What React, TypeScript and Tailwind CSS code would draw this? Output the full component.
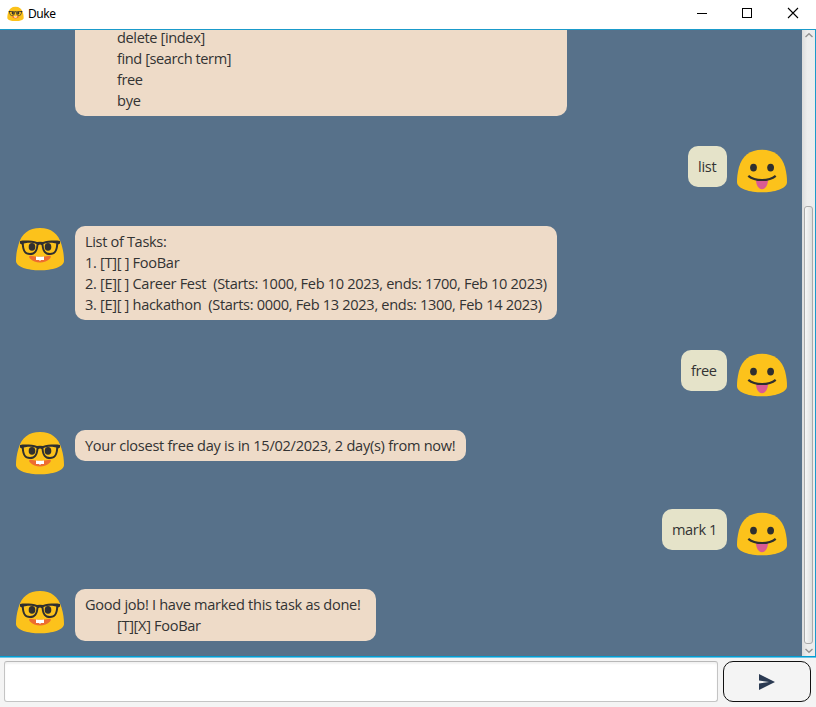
import React from "react";

function Nerd({ className = "" }: { className?: string }) {
  return (
    <svg viewBox="0 0 50 50" className={`shrink-0 ${className}`}>
      <path d="M25 2C36 2 43.5 7.5 46.5 18.5C48.4 25 49 30 49 35C49 41 37 44.3 25 44.3S1 41 1 35C1 30 1.6 25 3.5 18.5C6.5 7.5 14 2 25 2Z" fill="#fcc21b" />
      <ellipse cx="17" cy="20.9" rx="3.3" ry="3.8" fill="#2f2f2f" />
      <ellipse cx="33" cy="20.9" rx="3.3" ry="3.8" fill="#2f2f2f" />
      <path d="M15.5 29.8C14 29.6 13.6 31 15 32.4C20 37.8 30 37.8 35 32.4C36.4 31 36 29.6 34.5 29.8C28 31 22 31 15.5 29.8Z" fill="#ed6c30" />
      <path d="M21 30.5Q25 31 29 30.5V34H25.5V35H24.5V34H21Z" fill="#fff" />
      <path d="M5 14.9C10 14.3 18 14.6 22 16Q25 15.4 28 16C32 14.6 40 14.3 45 14.9V17.6L43.2 18.6C42.6 25.5 40.5 29 35 29C29.5 29 27.3 25.5 26.6 19.2C26 18.3 24 18.3 23.4 19.2C22.7 25.5 20.5 29 15 29C9.5 29 7.4 25.5 6.8 18.6L5 17.6ZM8.8 17.5C9 24 10.5 27 15 27C19.5 27 21.3 24 21.5 18C18 16.4 12 16.4 8.8 17.5ZM41.2 17.5C38 16.4 32 16.4 28.5 18C28.7 24 30.5 27 35 27C39.5 27 41 24 41.2 17.5Z" fill="#2f2f2f" />
    </svg>
  );
}

function Tongue() {
  return (
    <svg viewBox="0 0 50 50" className="h-[50px] w-[50px] shrink-0">
      <path d="M25 3.7C37 3.7 45 10 48 21C49.5 27 50 31 50 36C50 43 37 46.3 25 46.3S0 43 0 36C0 31 .5 27 2 21C5 10 13 3.7 25 3.7Z" fill="#fcc21b" />
      <ellipse cx="16.5" cy="21.6" rx="3.4" ry="3.9" fill="#2f2f2f" />
      <ellipse cx="33.6" cy="21.6" rx="3.4" ry="3.9" fill="#2f2f2f" />
      <path d="M19 34Q25 35.5 31 34C31 39 28.5 43.2 25 43.2S19 39 19 34Z" fill="#da5a93" />
      <path d="M11.3 29.8C18 35.4 32 35.4 38.7 29.8" fill="none" stroke="#2f2f2f" strokeWidth="2.2" />
    </svg>
  );
}

type Line = { text: string; cls: string };

function Bot({ lines, box, gap = "mb-[30px]", avatar = true }: { lines: Line[]; box: string; gap?: string; avatar?: boolean }) {
  return (
    <div className={`flex shrink-0 items-start gap-[10px] pl-[15px] ${gap}`}>
      {avatar ? <Nerd className="h-[50px] w-[50px] -mb-[30px]" /> : <div className="w-[50px] shrink-0" />}
      <div className={`rounded-[10px] bg-[#eedbc8] px-[10px] ${box}`}>
        {lines.map((l) => (
          <div key={l.text} className={`whitespace-pre ${l.cls}`}>{l.text}</div>
        ))}
      </div>
    </div>
  );
}

function User({ text, box }: { text: string; box: string }) {
  return (
    <div className="mb-[30px] flex h-[50px] shrink-0 items-start justify-end gap-[10px] pr-[15px]">
      <div className={`h-[41px] rounded-[10px] bg-[#e5e3c9] px-[10px] py-[10px] leading-[21px] whitespace-pre ${box}`}>{text}</div>
      <Tongue />
    </div>
  );
}

export default function App() {
  return (
    <div className="flex h-[707px] w-[816px] flex-col overflow-hidden bg-[#f4f4f4] font-['Open_Sans','Noto_Sans',sans-serif] text-[14.6px] leading-[21px] text-[#333]">
      <header className="flex h-[29px] shrink-0 items-center bg-white pl-[7px] text-black">
        <Nerd className="mt-[-1px] h-[17px] w-[17px]" />
        <span className="mt-[-2px] ml-1 font-['Noto_Sans',sans-serif] text-[12px] leading-4 tracking-[-0.45px]">Duke</span>
        <svg className="ml-auto h-[29px] w-[120px]" fill="none" stroke="#000" shapeRendering="crispEdges">
          <path d="M1 13.5H11M46.5 8.5H55.5V17.5H46.5Z" />
          <path d="M92 8L102 18M102 8L92 18" shapeRendering="auto" strokeWidth="1.1" />
        </svg>
      </header>
      <div className="h-px shrink-0 bg-[#1a9bcb]" />
      <main className="flex h-[626px] shrink-0 bg-[#57718a]">
        <section className="flex h-full w-[802px] flex-col justify-end overflow-hidden">
          <Bot
            avatar={false}
            box="w-[492px] rounded-t-none pb-[5px]"
            lines={[
              { text: "delete [index]", cls: "h-[18px] pl-8 leading-[15px] tracking-[-0.38px]" },
              { text: "find [search term]", cls: "pl-8 tracking-[-0.42px]" },
              { text: "free", cls: "pl-8 tracking-[-0.4px]" },
              { text: "bye", cls: "pl-8 tracking-[-0.25px]" },
            ]}
          />
          <User text="list" box="w-[39px] tracking-[-0.25px]" />
          <Bot
            box="w-[482px] py-[5px]"
            lines={[
              { text: "List of Tasks:", cls: "tracking-[-0.35px]" },
              { text: "1. [T][ ] FooBar", cls: "tracking-[-0.31px]" },
              { text: "2. [E][ ] Career Fest  (Starts: 1000, Feb 10 2023, ends: 1700, Feb 10 2023)", cls: "tracking-[-0.325px]" },
              { text: "3. [E][ ] hackathon  (Starts: 0000, Feb 13 2023, ends: 1300, Feb 14 2023)", cls: "tracking-[-0.325px]" },
            ]}
          />
          <User text="free" box="w-[46px] tracking-[-0.4px]" />
          <Bot
            box="w-[391px] py-[5px]"
            gap="mb-[48px]"
            lines={[{ text: "Your closest free day is in 15/02/2023, 2 day(s) from now!", cls: "tracking-[-0.285px]" }]}
          />
          <User text="mark 1" box="w-[65px] tracking-[-0.4px]" />
          <Bot
            box="w-[301px] py-[5px]"
            gap="mb-[15px]"
            lines={[
              { text: "Good job! I have marked this task as done!", cls: "tracking-[-0.3px]" },
              { text: "[T][X] FooBar", cls: "pl-8 tracking-[-0.33px]" },
            ]}
          />
        </section>
        <aside className="flex w-[13px] flex-col items-center bg-[linear-gradient(90deg,#dcdcdc,#ededed_40%,#ececec)]">
          <svg className="h-[176px] w-[12px] shrink-0" fill="none" stroke="#929292" strokeWidth="1.4">
            <path d="M2.5 7L6 3.8L9.5 7" />
          </svg>
          <div className="h-[438px] w-[9px] shrink-0 rounded-[3px] border border-[#aaa] bg-[linear-gradient(90deg,#f8f8f8,#dedede)]" />
          <svg className="h-[12px] w-[12px] shrink-0" fill="none" stroke="#929292" strokeWidth="1.4">
            <path d="M2.5 5L6 8.2L9.5 5" />
          </svg>
        </aside>
        <div className="w-px bg-[#1a9bcb]" />
      </main>
      <div className="h-[2px] shrink-0 bg-[linear-gradient(#039ed3_50%,#6cc5e6_50%)]" />
      <footer className="flex h-[49px] shrink-0 gap-[5px] pt-[3px] pl-1">
        <input className="h-[41px] w-[714px] rounded-[3px] border border-[#c4c4c4] border-t-[#b8b8b8] bg-white px-2 shadow-[inset_0_2px_2px_#f2f2f2] outline-none" />
        <button className="flex h-[41px] w-[88px] items-center justify-center rounded-[10px] border border-[#111] bg-[#f4f4f4]">
          <svg className="h-[16px] w-[16px]" viewBox="0 0 16 16" fill="#2b3a52">
            <path d="M0 0L16 8L0 16V9.6L10 8L0 6.4Z" />
          </svg>
        </button>
      </footer>
    </div>
  );
}
